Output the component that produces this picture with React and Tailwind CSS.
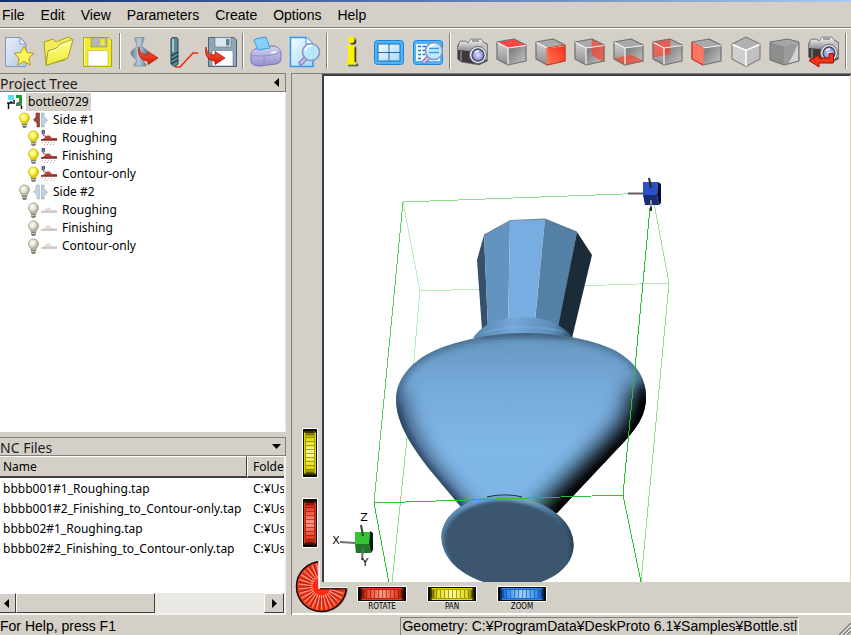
import React, { useState } from 'react';
import clsx from 'clsx';

const MENUS = ['File', 'Edit', 'View', 'Parameters', 'Create', 'Options', 'Help'];

const NC_FILES = [
  { name: 'bbbb001#1_Roughing.tap', folder: 'C:¥Users' },
  { name: 'bbbb001#2_Finishing_to_Contour-only.tap', folder: 'C:¥Users' },
  { name: 'bbbb02#1_Roughing.tap', folder: 'C:¥Users' },
  { name: 'bbbb02#2_Finishing_to_Contour-only.tap', folder: 'C:¥Users' },
];

const SIDES = [
  { name: 'Side #1', active: true, operations: ['Roughing', 'Finishing', 'Contour-only'] },
  { name: 'Side #2', active: false, operations: ['Roughing', 'Finishing', 'Contour-only'] },
];

// --- Toolbar icons, all on a 31x31 grid ---

const Icon = ({ children }) => (
  <svg width="31" height="31" viewBox="0 0 31 31" fill="none" className="block overflow-visible" aria-hidden="true">
    {children}
  </svg>
);

const SharedGradients = () => (
  <svg width="0" height="0" className="absolute" aria-hidden="true">
    <defs>
      <linearGradient id="paper" x1="0" y1="0" x2="1" y2="1">
        <stop offset="0" stopColor="#e8eef8" />
        <stop offset="1" stopColor="#b4c6e2" />
      </linearGradient>
      <linearGradient id="sky" x1="0" y1="0" x2="1" y2="1">
        <stop offset="0" stopColor="#f4fbff" />
        <stop offset="1" stopColor="#a4d8fa" />
      </linearGradient>
      <linearGradient id="folder" x1="0" y1="0" x2="0" y2="1">
        <stop offset="0" stopColor="#ffff90" />
        <stop offset="1" stopColor="#ecea38" />
      </linearGradient>
      <linearGradient id="lilac" x1="0" y1="0" x2="0" y2="1">
        <stop offset="0" stopColor="#d4d2f4" />
        <stop offset="1" stopColor="#9490cc" />
      </linearGradient>
      <linearGradient id="steel" x1="0" y1="0" x2="1" y2="0">
        <stop offset="0" stopColor="#64798e" />
        <stop offset="0.45" stopColor="#b9cbda" />
        <stop offset="1" stopColor="#5d7286" />
      </linearGradient>
      <linearGradient id="cubeFront" x1="0" y1="0" x2="1" y2="1">
        <stop offset="0" stopColor="#6f6f6f" />
        <stop offset="1" stopColor="#c9c9c9" />
      </linearGradient>
      <linearGradient id="cubeSide" x1="0" y1="0" x2="0" y2="1">
        <stop offset="0" stopColor="#d2d2d2" />
        <stop offset="1" stopColor="#8a8a8a" />
      </linearGradient>
      <linearGradient id="cubeRed" x1="1" y1="0" x2="0" y2="1">
        <stop offset="0" stopColor="#ff2a10" />
        <stop offset="1" stopColor="#ff7a5c" />
      </linearGradient>
      <linearGradient id="redArrow" x1="0" y1="0" x2="0" y2="1">
        <stop offset="0" stopColor="#ff6a50" />
        <stop offset="1" stopColor="#d81400" />
      </linearGradient>
      <linearGradient id="cameraBody" x1="0" y1="0" x2="0" y2="1">
        <stop offset="0" stopColor="#f6f6f6" />
        <stop offset="1" stopColor="#8c8c90" />
      </linearGradient>
      <radialGradient id="lens">
        <stop offset="0" stopColor="#e4e4ff" />
        <stop offset="1" stopColor="#7c7cd4" />
      </radialGradient>
      <radialGradient id="bulbOn" cx="0.4" cy="0.35">
        <stop offset="0" stopColor="#ffffd0" />
        <stop offset="0.6" stopColor="#fdf840" />
        <stop offset="1" stopColor="#d8c820" />
      </radialGradient>
      <radialGradient id="bulbOff" cx="0.4" cy="0.35">
        <stop offset="0" stopColor="#ffffff" />
        <stop offset="0.6" stopColor="#e4e2d0" />
        <stop offset="1" stopColor="#b4b29c" />
      </radialGradient>
      <filter id="hardShadow" x="-50%" y="-20%" width="220%" height="150%">
        <feDropShadow dx="2" dy="1.500" stdDeviation="0.4" floodColor="#3c3a30" />
      </filter>
    </defs>
  </svg>
);

const RedArrow = () => (
  <path
    d="M1 0C1.500 5 4 8 10 8V4.500L20 11L10 17.500V14C4 14-1 9 1 0Z"
    fill="url(#redArrow)"
    stroke="#a81808"
    strokeWidth="0.8"
    strokeLinejoin="round"
  />
);

const Magnifier = ({ x, y }) => (
  <g transform={`translate(${x} ${y})`}>
    <path d="M-6 7L-10 11" stroke="#8a7cba" strokeWidth="5" strokeLinecap="round" />
    <path d="M-6 7L-10 11" stroke="#c6b8e8" strokeWidth="2.500" strokeLinecap="round" />
    <circle r="8.500" fill="#b9e8fc" fillOpacity="0.9" stroke="#8a96c0" strokeWidth="1.600" />
    <path d="M-6-1A6 6 0 0 1 1-6" stroke="#fff" strokeWidth="1.600" />
  </g>
);

const NewIcon = () => (
  <Icon>
    <path d="M1.500 1.500H16L22 8V30.500H1.500Z" fill="url(#paper)" stroke="#7f96c4" />
    <path d="M16 1.500V8H22Z" fill="#f2f6fc" stroke="#7f96c4" />
    <path
      d="M20 10L23 16.500L30 17.300L24.800 22L26.300 29L20 25.500L13.700 29L15.200 22L10 17.300L17 16.500Z"
      fill="#fdf65a"
      stroke="#b49a18"
      strokeLinejoin="round"
    />
  </Icon>
);

const OpenIcon = () => (
  <Icon>
    <path d="M1 6L10 3L13 6L25 1L29 3L22 24L3 29Z" fill="#f2ec5c" stroke="#aaa020" strokeLinejoin="round" />
    <path d="M3 29.500L5 15L14 12L17 8L30 3.500L25 22Z" fill="url(#folder)" stroke="#aaa020" strokeLinejoin="round" />
    <path d="M6 16L14.500 13L17.500 9L28 5" stroke="#ffffd8" />
  </Icon>
);

const SaveIcon = () => (
  <Icon>
    <path d="M1.500 1.500H27L29.500 4V30.500H1.500Z" fill="#f2ec30" stroke="#b0a610" />
    <path d="M2.500 29V2.500" stroke="#ffffa0" />
    <path d="M9 1.500H25V11H9Z" fill="#b6b6b6" stroke="#98980c" strokeWidth="0.6" />
    <path d="M18.500 3H22.500V9.500H18.500Z" fill="#f2ec30" />
    <path d="M6 14.500H26V30H6Z" fill="#fff" stroke="#c0b818" strokeWidth="0.6" />
  </Icon>
);

const VaseArrowIcon = () => (
  <Icon>
    <path
      d="M8 1.500H17C17.500 5 15 7 15 10C17 13 21 13 21 17C21 21 16 23 16 25L19 28V30H7V28L10 25C10 23 4 21 4 17C4 13 9 13 10 10C10 7 7.500 5 8 1.500Z"
      fill="url(#steel)"
      stroke="#7c8c9c"
      strokeWidth="0.7"
    />
    <g transform="translate(11 11)"><RedArrow /></g>
  </Icon>
);

const ToolpathIcon = () => (
  <Icon>
    <path d="M5 3C5 1 12 1 12 3V28L8.500 30.500L5 28Z" fill="#5c8a98" stroke="#264450" />
    <path d="M7 3V16" stroke="#b8dce4" strokeWidth="1.500" />
    <path d="M5 20L12 16M5 24L12 20M5 28L12 24" stroke="#1c3640" strokeWidth="1.300" />
    <path d="M9 31H14L27 17H32" stroke="#f02c10" strokeWidth="1.600" />
  </Icon>
);

const WriteNcIcon = () => (
  <Icon>
    <path d="M3.500 1.500H29L31.500 4V30.500H3.500Z" fill="#8ea6b8" stroke="#4a6276" />
    <path d="M10 1.500H26V11H10Z" fill="#dbe6ee" stroke="#5a7286" strokeWidth="0.6" />
    <path d="M21 3H24.500V9.500H21Z" fill="#64808f" />
    <path d="M7 14.500H28V30H7Z" fill="#fff" stroke="#5a7286" strokeWidth="0.6" />
    <g transform="translate(0 11)"><RedArrow /></g>
  </Icon>
);

const PrintIcon = () => (
  <Icon>
    <path d="M1 19C1 15 4 13 8 12L22 10C28 10 31 14 31 18V23C31 26 29 27 26 28L10 30C4 30 1 28 1 25Z" fill="url(#lilac)" stroke="#7a76b4" />
    <path d="M4 4L7 2.500L16 1L20 12L8 14Z" fill="#86d0fa" stroke="#3c9ce0" />
    <path d="M2 19C8 21 24 20 30 16M14 20V29" stroke="#8c88c4" strokeWidth="0.8" />
    <path d="M21 17L26 16" stroke="#fff" strokeWidth="1.500" />
  </Icon>
);

const PreviewIcon = () => (
  <Icon>
    <path d="M1.500 1.500H17L24 8V30.500H1.500Z" fill="url(#sky)" stroke="#2c98ee" strokeWidth="1.500" />
    <path d="M17 1.500V8H24" fill="#fff" stroke="#2c98ee" />
    <Magnifier x={22} y={16} />
  </Icon>
);

const InfoIcon = () => (
  <Icon>
    <text
      x="17"
      y="28"
      fontFamily="'Liberation Serif', serif"
      fontWeight="bold"
      fontSize="38"
      textAnchor="middle"
      fill="#fcf400"
      stroke="#fcf400"
      strokeWidth="0.8"
      filter="url(#hardShadow)"
    >
      i
    </text>
  </Icon>
);

const ViewsIcon = () => (
  <Icon>
    <rect x="1.500" y="4.500" width="29" height="24" rx="3" fill="#4cb4fa" stroke="#1c86da" />
    <rect x="5" y="8" width="22" height="17" fill="url(#sky)" stroke="#2a6ca8" />
    <path d="M16 8V25M5 16.500H27" stroke="#2a6ca8" />
  </Icon>
);

const ReportIcon = () => (
  <Icon>
    <rect x="1.500" y="4.500" width="29" height="24" rx="3" fill="#4cb4fa" stroke="#1c86da" />
    <rect x="4" y="8" width="24" height="17" fill="#f2faff" />
    <path d="M6 10.500H9M10.500 10.500H14M6 14.500H9M10.500 14.500H14M6 18.500H9M10.500 18.500H13M6 22.500H9" stroke="#1c78c8" strokeWidth="1.400" />
    <Magnifier x={22} y={15} />
    <path d="M17 12.500H27M17 16.500H27" stroke="#3c9ce8" strokeWidth="1.500" />
  </Icon>
);

const CameraShape = () => (
  <>
    <path d="M0.500 10L3 5H9L11 7L14 3H24L26 6L30.500 8V25L22 29L4 26L0.500 23Z" fill="#3a3a3e" stroke="#77777b" strokeWidth="0.7" />
    <path d="M1 11L3 5.500H9L11 7.500L14 3.500H24L26 6.500L30 8.500V14L11 15L1 14Z" fill="url(#cameraBody)" />
    <path d="M26 9L30 10V23L26 26Z" fill="#c4c4c8" />
    <path d="M15 5H22" stroke="#707074" strokeWidth="1.200" />
    <path d="M4 15V25" stroke="#8a8a8e" strokeWidth="1.500" />
    <circle cx="21" cy="19" r="8.500" fill="#ececf0" stroke="#6a6a6e" />
    <circle cx="21" cy="19" r="6" fill="url(#lens)" stroke="#48485c" strokeWidth="1.300" />
    <path d="M18 17A4 4 0 0 1 22 15" stroke="#fff" strokeWidth="1.300" />
  </>
);

const CameraIcon = () => <Icon><CameraShape /></Icon>;

const CameraBackIcon = () => (
  <Icon>
    <g transform="translate(0 -2)"><CameraShape /></g>
    <path d="M1 24.500L11 19V22H21V17.500H25.500V27H11V31Z" fill="#f43418" stroke="#9c1400" strokeLinejoin="round" />
  </Icon>
);

const CUBE_FACES = {
  top: 'M1 6L18 3L30 9L12 12Z',
  front: 'M12 12L30 9V25L12 29Z',
  left: 'M1 6L12 12V29L1 23Z',
  right: 'M18 3L30 9V26L18 19Z',
  bottom: 'M1 23L18 19L30 25L12 29Z',
  back: 'M1 6L18 3V18L1 21Z',
};

const CubeIcon = ({ face }) => {
  const hidden = face === 'right' || face === 'bottom' || face === 'back';
  return (
    <Icon>
      <path d={CUBE_FACES.top} fill={face === 'top' ? '#f44' : '#aaa'} />
      <path d={CUBE_FACES.left} fill={face === 'left' ? '#ff7660' : 'url(#cubeSide)'} />
      <path d={CUBE_FACES.front} fill={face === 'front' ? 'url(#cubeRed)' : 'url(#cubeFront)'} />
      {hidden && <path d={CUBE_FACES[face]} fill="#ff3c28" fillOpacity="0.65" stroke="#f05440" strokeWidth="0.7" />}
      <path d="M1 6L18 3L30 9V25L12 29L1 23Z" stroke="#707070" strokeWidth="1.200" strokeLinejoin="round" />
      <path d="M1.500 6.500L12 12L30 9.500M12 12V28.500" stroke="#f4f4f4" strokeWidth="1.200" />
      {face === 'left' && <path d="M1 6L12 12V29L1 23Z" stroke="#ec2c18" />}
      {face === 'front' && <path d={CUBE_FACES.front} stroke="#e03418" />}
    </Icon>
  );
};

const IsoCubeIcon = () => (
  <Icon>
    <path d="M16 1L30 8L16 14L2 8Z" fill="#b0b0b0" />
    <path d="M2 8L16 14V30.500L2 23Z" fill="#cfcfcf" />
    <path d="M30 8L16 14V30.500L30 23Z" fill="#c0c0c0" />
    <path d="M16 1L30 8V23L16 30.500L2 23V8Z" stroke="#808080" strokeWidth="1.200" strokeLinejoin="round" />
    <path d="M2.500 8.500L16 14.500L29.500 8.500M16 14.500V30" stroke="#fff" strokeWidth="1.500" />
  </Icon>
);

const ShadedCubeIcon = () => (
  <Icon>
    <path d="M1 6L19 3L30 6L15 10Z" fill="#a6a6a6" />
    <path d="M1 6L15 10V29L1 24Z" fill="#8e8e8e" />
    <path d="M15 10L30 6V25L15 29Z" fill="#9c9c9c" />
    <path d="M29 8V25L19 27.500C24 21 26 14 29 8Z" fill="#d4d4d4" />
    <path d="M1 6L19 3L30 6V25L15 29L1 24Z" stroke="#707070" strokeLinejoin="round" />
  </Icon>
);

const TOOL_GROUPS = [
  [['New project', <NewIcon />], ['Open project', <OpenIcon />], ['Save project', <SaveIcon />]],
  [['Load geometry', <VaseArrowIcon />], ['Calculate toolpaths', <ToolpathIcon />], ['Write NC program', <WriteNcIcon />]],
  [['Print', <PrintIcon />], ['Print preview', <PreviewIcon />]],
  [['Information', <InfoIcon />], ['Four views', <ViewsIcon />], ['Report', <ReportIcon />]],
  [
    ['Camera', <CameraIcon />],
    ['Top view', <CubeIcon face="top" />],
    ['Front view', <CubeIcon face="front" />],
    ['Right view', <CubeIcon face="right" />],
    ['Bottom view', <CubeIcon face="bottom" />],
    ['Back view', <CubeIcon face="back" />],
    ['Left view', <CubeIcon face="left" />],
    ['Isometric view', <IsoCubeIcon />],
    ['Shaded view', <ShadedCubeIcon />],
    ['Previous view', <CameraBackIcon />],
  ],
];

const Toolbar = () => (
  <div role="toolbar" className="flex h-11 shrink-0 items-center overflow-hidden">
    {TOOL_GROUPS.map((group, index) => (
      <div key={index} className="flex shrink-0 items-center">
        {group.map(([label, icon]) => (
          <button key={label} type="button" aria-label={label} title={label} className="flex w-[39px] justify-center">
            {icon}
          </button>
        ))}
        <div className="flex h-9 w-[6px] justify-center">
          <div className="w-[2px] border-l border-r border-l-[#808080] border-r-white" />
        </div>
      </div>
    ))}
  </div>
);

// --- Project tree ---

const Bulb = ({ on }) => (
  <svg width="13" height="17" viewBox="0 0 13 17" className="shrink-0" aria-hidden="true">
    <path
      d="M6.500 1A4.800 4.800 0 0 0 1.500 6C1.500 8.500 4 9.500 4 12H9C9 9.500 11.500 8.500 11.500 6A4.800 4.800 0 0 0 6.500 1Z"
      fill={on ? 'url(#bulbOn)' : 'url(#bulbOff)'}
      stroke={on ? '#c8b420' : '#a09e8c'}
      strokeWidth="0.8"
    />
    <path d="M4 12H9V14.500L7.500 16H5.500L4 14.500Z" fill="#808078" />
    <path d="M4 13.500H9" stroke="#d4d4cc" strokeWidth="0.8" />
  </svg>
);

const SideGlyph = ({ on }) => (
  <svg width="15" height="16" viewBox="0 0 15 16" className="shrink-0" aria-hidden="true">
    <path d="M3 1H6.500V15H4V11L0.500 8L3 5Z" fill={on ? '#a4443c' : '#c4d2de'} stroke={on ? '#6c2c28' : '#a8b8c6'} strokeWidth="0.6" />
    <path d="M8.500 1H11V5L14.500 8L11 12V15H8.500Z" fill="#c4d2de" stroke="#90a4b4" strokeWidth="0.6" />
  </svg>
);

const OperationGlyph = ({ on }) => (
  <svg width="16" height="16" viewBox="0 0 16 16" className="shrink-0" aria-hidden="true">
    <path d="M0 9H2L6 5.500H8.500L11 8H16V10.500H0Z" fill={on ? '#b4443a' : '#e4dada'} />
    <path d="M0 10H16" stroke={on ? '#5c2420' : '#b8acac'} />
    {on && (
      <>
        <path d="M1 0.500H3.500V3.500L2.300 4.500L1 3.500Z" fill="#8088b8" stroke="#30386c" strokeWidth="0.8" />
        <path d="M2 5L6 7" stroke="#a44" />
        <path d="M1 12.500H15M3 14.500H14" stroke="#d0a098" strokeDasharray="1 2" />
      </>
    )}
  </svg>
);

const MachineGlyph = () => (
  <svg width="16" height="16" viewBox="0 0 16 16" className="shrink-0" aria-hidden="true">
    <path d="M1 1H7V6H1Z" fill="#58e0f4" />
    <path d="M9 1H15V12H9V9H12V4H9Z" fill="#18a028" />
    <path d="M10 8H14V12H10Z" fill="#687068" />
    <path d="M0 9H8M1.500 9V15M14.500 12V15M4 7V9M6 7H8" stroke="#101010" strokeWidth="1.500" />
  </svg>
);

const PanelHeader = ({ title, open, onToggle, direction }) => (
  <div className="flex h-[19px] shrink-0 items-center justify-between overflow-hidden border border-l-0 border-[#808080] text-[14px] text-[#202020]">
    <h2 className="pt-[2px] leading-[17px]">{title}</h2>
    <button type="button" aria-label={`Toggle ${title}`} aria-expanded={open} onClick={onToggle} className="px-1">
      <svg width="9" height="9" viewBox="0 0 9 9" aria-hidden="true">
        <path d={direction === 'left' ? 'M7 0V9L2 4.500Z' : 'M0 2H9L4.500 7Z'} fill="#000" />
      </svg>
    </button>
  </div>
);

const ProjectTree = () => (
  <ul role="tree" className="min-h-0 flex-1 overflow-hidden border-r border-[#e8e6e0] bg-white pt-px leading-[18px]">
    <li role="treeitem" aria-selected="true" className="flex items-center gap-[3px] pl-[7px]">
      <MachineGlyph />
      <span className="bg-[#d4d0c8] px-[2px]">bottle0729</span>
    </li>
    {SIDES.map((side) => (
      <li key={side.name} role="treeitem" aria-selected="false">
        <div className="flex items-center pl-[18px]">
          <Bulb on={side.active} />
          <span className="flex items-center gap-[5px] pl-[2px]">
            <SideGlyph on={side.active} />
            {side.name}
          </span>
        </div>
        <ul role="group">
          {side.operations.map((operation) => (
            <li key={operation} role="treeitem" aria-selected="false" className="flex items-center pl-[27px]">
              <Bulb on={side.active} />
              <span className="flex items-center gap-[5px] pl-px">
                <OperationGlyph on={side.active} />
                {operation}
              </span>
            </li>
          ))}
        </ul>
      </li>
    ))}
  </ul>
);

// --- NC file list ---

const RAISED = 'border border-t-white border-l-white border-r-[#404040] border-b-[#404040] bg-[#d4d0c8]';

const ScrollArrow = ({ label, d }) => (
  <button type="button" aria-label={label} className={clsx(RAISED, 'flex w-5 shrink-0 items-center justify-center')}>
    <svg width="5" height="9" viewBox="0 0 5 9" aria-hidden="true"><path d={d} fill="#000" /></svg>
  </button>
);

const NcFileList = () => (
  <div className="border-b-2 border-r-2 border-[#f4f2ee]">
    <div className="h-[137px] overflow-hidden bg-white">
      <table className="w-[360px] table-fixed border-separate border-spacing-0 text-left">
        <thead>
          <tr>
            <th className="h-[22px] w-[247px] border border-b-2 border-l-0 border-t-white border-r-[#404040] border-b-[#404040] bg-[#d4d0c8] px-[3px] py-0 font-normal">Name</th>
            <th className="h-[22px] border border-b-2 border-t-white border-l-white border-b-[#404040] bg-[#d4d0c8] px-[5px] py-0 font-normal">Folder</th>
          </tr>
        </thead>
        <tbody>
          {NC_FILES.map((file) => (
            <tr key={file.name} className="h-5">
              <td className="whitespace-nowrap px-[3px] pb-0 pt-px">{file.name}</td>
              <td className="whitespace-nowrap px-[6px] pb-0 pt-px">{file.folder}</td>
            </tr>
          ))}
        </tbody>
      </table>
    </div>
    <div className="flex h-5 bg-[#eae8e3]">
      <div className="-ml-1 flex"><ScrollArrow label="Scroll left" d="M5 0V9L0 4.500Z" /></div>
      <div className="flex flex-1">
        <div className={clsx(RAISED, 'w-[56%]')} />
      </div>
      <ScrollArrow label="Scroll right" d="M0 0V9L5 4.500Z" />
    </div>
  </div>
);

// --- Thumbwheels ---

const WHEEL_COLORS = {
  red: ['#5a1008', '#e83a20', '#ff9a84'],
  yellow: ['#4c4800', '#e0d800', '#ffff98'],
  blue: ['#0c3c84', '#2c88f0', '#a4d4ff'],
};

const RIDGES = [4, 6, 9, 13, 17, 21, 25, 29, 33, 37, 41, 44, 46];

const WheelDrawing = ({ color, vertical }) => {
  const [dark, base, light] = WHEEL_COLORS[color];
  const id = `wheel-${color}-${vertical ? 'v' : 'h'}`;
  return (
    <svg width={vertical ? 16 : 50} height={vertical ? 50 : 16} viewBox={vertical ? '0 0 16 50' : '0 0 50 16'} className="block" aria-hidden="true">
      <defs>
        <linearGradient id={id}>
          <stop offset="0" stopColor={dark} />
          <stop offset="0.15" stopColor={base} />
          <stop offset="0.5" stopColor={light} />
          <stop offset="0.85" stopColor={base} />
          <stop offset="1" stopColor={dark} />
        </linearGradient>
      </defs>
      <g transform={vertical ? 'translate(16 0) rotate(90)' : undefined}>
        <path d="M0 0H50V16H0Z" fill="#fff" />
        <path d="M1 1H49V15H1Z" fill="#0c0c0c" />
        <rect x="3" y="2" width="44" height="12" rx="2" fill={base} />
        <rect x="3" y="4" width="44" height="8" fill={`url(#${id})`} />
        {RIDGES.map((x) => <path key={x} d={`M${x + 0.5} 4V12`} stroke={dark} strokeOpacity="0.5" />)}
        <path d="M3 3.500H47M3 12.500H47" stroke={dark} strokeOpacity="0.4" />
        <path d="M3 2H5V14H3ZM45 2H47V14H45Z" fill="#000" fillOpacity="0.4" />
      </g>
    </svg>
  );
};

const Thumbwheel = ({ id, color, label, vertical = false, caption }) => {
  const [value, setValue] = useState(50);
  return (
    <div className="flex flex-col items-center">
      <div className="relative">
        <WheelDrawing color={color} vertical={vertical} />
        <input
          id={id}
          type="range"
          aria-label={caption ? undefined : label}
          value={value}
          onChange={(e) => setValue(Number(e.target.value))}
          className="absolute inset-0 h-full w-full cursor-pointer opacity-0"
        />
      </div>
      {caption && <label htmlFor={id} className="font-['DejaVu_Sans_Condensed',sans-serif] text-[8px] leading-[10px]">{caption}</label>}
    </div>
  );
};

const SPOKES = Array.from({ length: 30 }, (_, i) => i * 12);

// Three quarter dial in the corner of the view
const RotateDial = () => (
  <svg width="54" height="54" viewBox="0 0 54 54" className="absolute bottom-[2px] left-[3px]" aria-hidden="true">
    <defs>
      <clipPath id="dialClip"><path d="M0 0H24V29H54V54H0Z" /></clipPath>
    </defs>
    <g clipPath="url(#dialClip)">
      <circle cx="28" cy="28.500" r="25" fill="#a8a49c" />
      <circle cx="26.500" cy="27.500" r="25" fill="#f43c20" stroke="#100400" strokeWidth="1.500" />
      {SPOKES.map((angle) => (
        <path key={angle} d="M26.500 4.500V20" stroke="#ffa898" strokeWidth="0.9" transform={`rotate(${angle} 26.500 27.500)`} />
      ))}
      {SPOKES.map((angle) => (
        <path key={angle} d="M26.500 4V16" stroke="#b41c08" strokeWidth="0.9" transform={`rotate(${angle + 5} 26.500 27.500)`} />
      ))}
      <circle cx="26.500" cy="27.500" r="9" fill="#fc2c14" />
    </g>
    <path d="M24 2V29H52" stroke="#fff" strokeWidth="1.500" fill="none" />
    <path d="M25 29.700H51.500" stroke="#200800" strokeWidth="1.200" />
  </svg>
);

// --- 3D view ---

const BODY = 'M396 400C396 376 416 356 446 346C472 337 500 333 523 333C556 333 590 339 612 349C634 360 646 376 646 397C646 416 636 429 623 443L557 513H466L430 470C416 452 396 425 396 400Z';

const GeometryView = () => (
  <svg viewBox="324 76 525 506" preserveAspectRatio="xMinYMin meet" className="block h-full w-full" role="img" aria-label="Bottle geometry">
    <defs>
      <clipPath id="bodyClip"><path d={BODY} /></clipPath>
      <clipPath id="baseClip"><ellipse cx="507.500" cy="541" rx="66.500" ry="45" transform="rotate(6 507.500 541)" /></clipPath>
      <filter id="blurWide" x="-50%" y="-50%" width="200%" height="200%"><feGaussianBlur stdDeviation="11" /></filter>
      <filter id="blurNarrow" x="-50%" y="-50%" width="200%" height="200%"><feGaussianBlur stdDeviation="4" /></filter>
      <filter id="blurRim" x="-20%" y="-20%" width="140%" height="140%"><feGaussianBlur stdDeviation="1.500" /></filter>
      <linearGradient id="bodyFill" x1="0" y1="0" x2="0" y2="1">
        <stop offset="0" stopColor="#6695bd" />
        <stop offset="0.3" stopColor="#75aadb" />
        <stop offset="0.65" stopColor="#7fb7e9" />
        <stop offset="1" stopColor="#7db5e7" />
      </linearGradient>
      <linearGradient id="collarFill" x1="0" y1="0" x2="1" y2="0">
        <stop offset="0" stopColor="#5686b0" />
        <stop offset="0.4" stopColor="#74a8d8" />
        <stop offset="0.8" stopColor="#5c8cb8" />
        <stop offset="1" stopColor="#2c4860" />
      </linearGradient>
      <linearGradient id="rimFill" x1="0" y1="0" x2="1" y2="0">
        <stop offset="0" stopColor="#4c7698" />
        <stop offset="0.3" stopColor="#6ea4d4" />
        <stop offset="0.65" stopColor="#6ea4d4" />
        <stop offset="1" stopColor="#20323f" />
      </linearGradient>
    </defs>

    {/* far edges of the bounding box */}
    <g fill="none" stroke="#b8ecb8" shapeRendering="crispEdges">
      <path d="M403 202L420 291L669 283M420 291L407 438" />
      <path d="M654 203L669 283" stroke="#9ce49c" />
      <path d="M669 283L641 582M407 438L392 583" stroke="#8ede8e" />
      <path d="M403 202L650 193" stroke="#8ede8e" />
    </g>

    {/* neck facets */}
    <path d="M484 235L477 260L482 330H488Z" fill="#34506a" />
    <path d="M484 235L510 221L508 330H488Z" fill="#6394bf" />
    <path d="M510 221L545 219L534 330H508Z" fill="#77ade0" />
    <path d="M545 219L577 232L558 332H534Z" fill="#5480a6" />
    <path d="M577 232L592 255L572 338H556Z" fill="#1b2b38" />
    <path d="M484 235L510 220.500L545 219L577 232" fill="none" stroke="#3a5a76" strokeWidth="0.7" />
    <path d="M473 338C480 328 492 319 510 318C530 316 545 318 556 324C564 328 570 333 574 339L523 345Z" fill="url(#collarFill)" />
    <path d="M484 333C500 326 545 325 563 332" fill="none" stroke="#88bbea" strokeOpacity="0.3" strokeWidth="2" />

    {/* body with shading along its outline */}
    <path d={BODY} fill="url(#bodyFill)" />
    <g clipPath="url(#bodyClip)" fill="none">
      <path d="M649 385C652 420 636 435 623 450L545 528" stroke="#000" strokeWidth="40" filter="url(#blurWide)" />
      <path d="M394 390C394 425 416 456 430 474L470 522" stroke="#060e16" strokeWidth="12" filter="url(#blurWide)" />
      <path d="M648 385C650 418 636 434 626 447L555 518" stroke="#000" strokeWidth="14" filter="url(#blurNarrow)" />
      <path d="M394 405C398 430 414 455 428 472L462 510" stroke="#0a1620" strokeWidth="5" filter="url(#blurNarrow)" />
      <path d="M395 405C394 376 414 355 446 345C472 336 500 332 523 332C556 332 590 337 613 348C635 359 648 376 648 399" stroke="#1c3448" strokeWidth="4" filter="url(#blurNarrow)" />
      <path d="M484 336C505 331 545 331 568 337" stroke="#24384a" strokeWidth="3" filter="url(#blurNarrow)" />
    </g>

    {/* base */}
    <g clipPath="url(#baseClip)">
      <path d="M435 490H580V590H435Z" fill="url(#rimFill)" />
      <ellipse cx="507" cy="544" rx="63" ry="43" transform="rotate(6 507 544)" fill="#3a566e" filter="url(#blurRim)" />
      <path d="M441 560H580V590H441Z" fill="#3a566e" filter="url(#blurRim)" />
    </g>
    <path d="M487 497C500 494 512 494.500 522 497" fill="none" stroke="#1c2c3a" />

    {/* near edges of the bounding box */}
    <g fill="none" stroke="#2cc02c" shapeRendering="crispEdges">
      <path d="M403 202L374 503" stroke="#5cd05c" />
      <path d="M650 208L623 495L641 582" />
      <path d="M623 495L374 503L389 583" />
    </g>

    {/* light handle */}
    <g strokeWidth="2">
      <path d="M628 193.500H643" stroke="#606060" />
      <path d="M643 182H658L657 195H643Z" fill="#2c50c8" />
      <path d="M643 195H657L659 205H645Z" fill="#1a2c78" />
      <path d="M658 182L661 184V203L659 205L657 195Z" fill="#0a1030" />
      <path d="M649 178L651 188M651 199V211" stroke="#282828" />
      <path d="M651 200V207" stroke="#909090" />
    </g>

    {/* axes */}
    <g strokeWidth="2">
      <path d="M340 542L355 543" stroke="#707070" />
      <path d="M355 532H370L369 544H355Z" fill="#36c436" />
      <path d="M355 544H369L371 553H356Z" fill="#1c7c24" />
      <path d="M370 531L373 533V550L371 553L369 544Z" fill="#04200a" />
      <path d="M361 525L363 536" stroke="#404040" />
      <path d="M363 547L362 560" stroke="#686868" />
    </g>
    <g fontFamily="'DejaVu Sans', sans-serif" fontSize="11" textAnchor="middle" fill="#000">
      <text x="364" y="521">Z</text>
      <text x="336" y="544">X</text>
      <text x="365" y="566">Y</text>
    </g>
  </svg>
);

const App = () => {
  const [treeOpen, setTreeOpen] = useState(true);
  const [filesOpen, setFilesOpen] = useState(true);

  return (
    <div className="flex h-screen flex-col overflow-hidden bg-[#d4d0c8] font-['Noto_Sans',sans-serif] text-[12px] text-black">
      <SharedGradients />
      <div className="h-[2px] shrink-0 bg-linear-to-r from-[#12306e] to-[#a6caf0]" />
      <nav className="flex h-[27px] shrink-0 items-center gap-4 border-b border-white pl-[2px] font-['Liberation_Sans',sans-serif] text-[14px] shadow-[inset_0_-1px_0_#808080]">
        {MENUS.map((menu) => <button key={menu} type="button">{menu}</button>)}
      </nav>
      <Toolbar />

      <main className="flex min-h-0 flex-1 gap-[5px]">
        <aside className="flex w-[286px] shrink-0 flex-col">
          <PanelHeader title="Project Tree" direction="left" open={treeOpen} onToggle={() => setTreeOpen(!treeOpen)} />
          {treeOpen ? <ProjectTree /> : <div className="flex-1" />}
          <div className="h-[6px] shrink-0 border-t border-white" />
          <PanelHeader title="NC Files" direction="down" open={filesOpen} onToggle={() => setFilesOpen(!filesOpen)} />
          {filesOpen && <NcFileList />}
        </aside>

        <section className="relative grid min-w-0 flex-1 grid-cols-[30px_1fr] grid-rows-[1fr_33px] border-l border-t border-[#808080]">
          <div className="flex flex-col items-end justify-end gap-5 pb-[34px] pr-1">
            <Thumbwheel id="tilt" color="yellow" label="Pan vertically" vertical />
            <Thumbwheel id="turn" color="red" label="Rotate vertically" vertical />
          </div>
          <div className="min-h-0 border-2 border-b-0 border-r border-[#404040] border-r-[#d4d0c8] bg-white">
            <GeometryView />
          </div>
          <div className="col-span-2 flex items-start gap-5 border-b-2 border-white pl-[65px] pt-1">
            <Thumbwheel id="rotate" color="red" caption="ROTATE" />
            <Thumbwheel id="pan" color="yellow" caption="PAN" />
            <Thumbwheel id="zoom" color="blue" caption="ZOOM" />
          </div>
          <RotateDial />
        </section>
      </main>

      <footer className="flex h-5 shrink-0 items-end font-['Liberation_Sans',sans-serif] text-[14px] leading-[17px]">
        <p className="flex-1">For Help, press F1</p>
        <p className="border border-b-0 border-l-[#808080] border-r-white border-t-[#808080] px-px">
          Geometry: C:¥ProgramData¥DeskProto 6.1¥Samples¥Bottle.stl
        </p>
        <div className="flex w-[52px] justify-end">
          <svg width="12" height="12" viewBox="0 0 12 12" aria-hidden="true">
            <path d="M0 12L12 0M4 12L12 4M8 12L12 8" stroke="#808080" strokeWidth="1.500" />
            <path d="M2 12L12 2M6 12L12 6" stroke="#fff" />
          </svg>
        </div>
      </footer>
    </div>
  );
};

export default App;
